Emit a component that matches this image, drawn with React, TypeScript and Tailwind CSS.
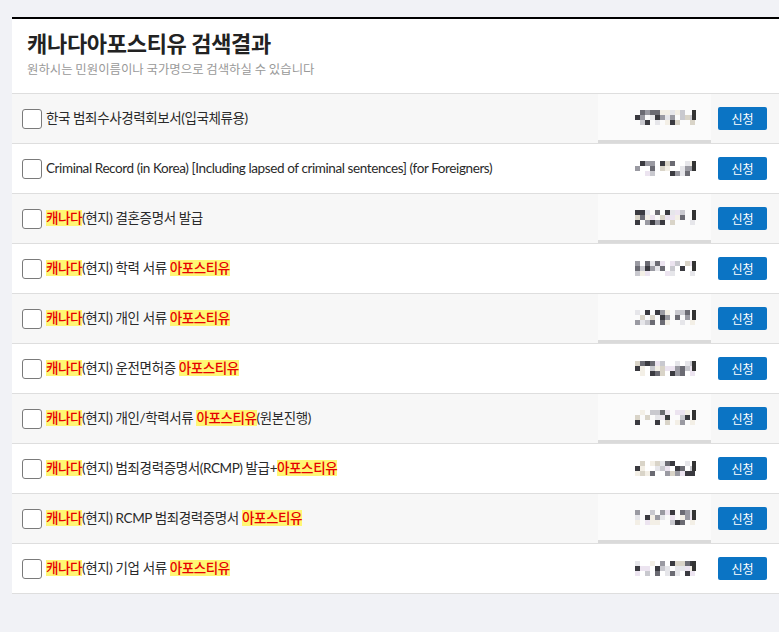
import React from "react";

type Part = { t: string; h?: boolean };
const rows: Part[][] = [
  [{ t: "한국 범죄수사경력회보서(입국체류용)" }],
  [{ t: "Criminal Record (in Korea) [Including lapsed of criminal sentences] (for Foreigners)" }],
  [{ t: "캐나다", h: true }, { t: "(현지) 결혼증명서 발급" }],
  [{ t: "캐나다", h: true }, { t: "(현지) 학력 서류 " }, { t: "아포스티유", h: true }],
  [{ t: "캐나다", h: true }, { t: "(현지) 개인 서류 " }, { t: "아포스티유", h: true }],
  [{ t: "캐나다", h: true }, { t: "(현지) 운전면허증 " }, { t: "아포스티유", h: true }],
  [{ t: "캐나다", h: true }, { t: "(현지) 개인/학력서류 " }, { t: "아포스티유", h: true }, { t: "(원본진행)" }],
  [{ t: "캐나다", h: true }, { t: "(현지) 범죄경력증명서(RCMP) 발급+" }, { t: "아포스티유", h: true }],
  [{ t: "캐나다", h: true }, { t: "(현지) RCMP 범죄경력증명서 " }, { t: "아포스티유", h: true }],
  [{ t: "캐나다", h: true }, { t: "(현지) 기업 서류 " }, { t: "아포스티유", h: true }],
];

const palette = ["#e6e6ea", "#c9c9cf", "#9a9aa2", "#6b6b73", "#3a3a40", "#f3efe6", "#ece4f0", "#d9d4c8"];

function Pixels({ seed }: { seed: number }) {
  const cells: React.ReactNode[] = [];
  let s = seed * 9301 + 49297;
  const rnd = () => {
    s = (s * 9301 + 49297) % 233280;
    return s / 233280;
  };
  for (let r = 0; r < 3; r++) {
    for (let c = 0; c < 12; c++) {
      const v = rnd();
      if (v < 0.35) continue;
      const col = palette[Math.floor(rnd() * palette.length)];
      cells.push(<rect key={r + "-" + c} x={c * 5} y={r * 5} width={5} height={5} fill={col} />);
    }
  }
  cells.push(<rect key="end" x={57} y={0} width={4} height={10} fill="#333" />);
  return (
    <svg width="62" height="15" viewBox="0 0 62 15">
      {cells}
    </svg>
  );
}

export default function App() {
  return (
    <div
      className="min-h-[632px] w-full bg-[#f1f2f6] pt-[17px]"
      style={{ fontFamily: '"Noto Sans CJK KR", "Noto Sans", sans-serif' }}
    >
      <div className="ml-[12px] border-t-2 border-black bg-white">
        <div className="px-[15px] pt-[8px] pb-[16px]">
          <h1 className="text-[22px] font-bold leading-[30px] text-[#222] tracking-[-0.3px]">캐나다아포스티유 검색결과</h1>
          <p className="mt-[4px] text-[12.4px] leading-[16px] text-[#999]">원하시는 민원이름이나 국가명으로 검색하실 수 있습니다</p>
        </div>
        <div className="border-t border-[#dedede]">
          {rows.map((parts, i) => {
            const gray = i % 2 === 0;
            return (
              <div
                key={i}
                className={`flex h-[50px] items-stretch border-b border-[#dedede] ${gray ? "bg-[#f7f7f7]" : "bg-white"}`}
              >
                <div className="flex flex-1 items-center pl-[10px]">
                  <span className="mr-[4px] h-[20px] w-[20px] shrink-0 rounded-[3px] border border-[#7a7a7a] bg-white" />
                  <span
                    className="text-[13.5px] tracking-[-0.4px] text-[#2a2a2a]"
                    style={{ fontFamily: 'Lato, "Noto Sans CJK KR", sans-serif' }}
                  >
                    {parts.map((p, j) =>
                      p.h ? (
                        <span key={j} className="bg-[#fff774] font-medium text-[#e60000]">
                          {p.t}
                        </span>
                      ) : (
                        <span key={j}>{p.t}</span>
                      )
                    )}
                  </span>
                </div>
                <div
                  className={`flex w-[113px] items-center justify-end pr-[14px] ${
                    gray ? "bg-[#fbfbfb] border-b-[3px] border-[#dadada]" : "bg-white"
                  }`}
                >
                  <Pixels seed={i + 3} />
                </div>
                <div className="flex items-center pl-[7px] pr-[12px]">
                  <button className="h-[23px] w-[49px] rounded-[2px] bg-[#0b74c4] text-[12px] text-white">신청</button>
                </div>
              </div>
            );
          })}
        </div>
      </div>
    </div>
  );
}
